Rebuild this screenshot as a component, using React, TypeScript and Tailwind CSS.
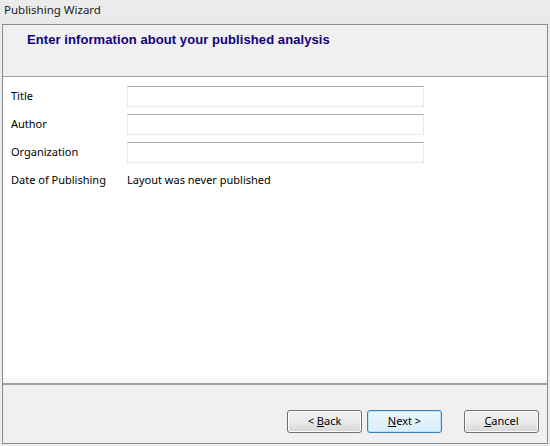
import React from "react";

const font = { fontFamily: '"Noto Sans", "Open Sans", sans-serif' };

const fields = ["Title", "Author", "Organization"];

const WizardButton = ({ children, focused }: { children: React.ReactNode; focused?: boolean }) => (
  <button
    className={
      focused
        ? "h-[23px] w-[75px] rounded-[3px] border border-[#3c7fb1] bg-gradient-to-b from-[#eaf6fd] to-[#d9eefa] pb-[1px] text-[11px] text-black shadow-[inset_0_0_0_1px_#b7e4f9]"
        : "h-[23px] w-[75px] rounded-[3px] border border-[#707070] bg-gradient-to-b from-[#f2f2f2] via-[#ebebeb] to-[#d6d6d6] pb-[1px] text-[11px] text-black shadow-[inset_0_0_0_1px_#fcfcfc]"
    }
  >
    {children}
  </button>
);

export default function App() {
  return (
    <div className="flex h-[446px] w-[550px] flex-col bg-[#ececec] text-[11px] text-black" style={font}>
      {/* Title bar */}
      <div className="flex h-[24px] items-center bg-gradient-to-b from-[#ececec] to-[#e9e9e9] pb-[4px] pl-[4px] text-[11.5px] text-[#1a1a1a]">
        Publishing Wizard
      </div>

      {/* Frame */}
      <div className="ml-[2px] flex h-[420px] w-[546px] flex-col border border-[#8c8c8c]">
        {/* Header */}
        <div className="h-[52px] border-b border-[#a0a0a0] bg-[#f0f0f0] pl-[24px] pt-[5px]">
          <span
            className="text-[13px] font-bold tracking-[0.08px] text-[#12007f]"
            style={{ fontFamily: '"Liberation Sans", Arial, sans-serif' }}
          >
            Enter information about your published analysis
          </span>
        </div>

        {/* Content */}
        <div className="flex h-[301px] flex-col gap-[7px] bg-white pl-[8px] pr-[2px] pt-[9px]">
          {fields.map((f) => (
            <div key={f} className="flex h-[21px] items-center">
              <span className="w-[116px]">{f}</span>
              <input
                className="h-[21px] w-[297px] border border-[#e3e9ef] border-t-[#abadb3] bg-white outline-none"
                type="text"
              />
            </div>
          ))}
          <div className="flex h-[21px] items-center">
            <span className="w-[116px]">Date of Publishing</span>
            <span>Layout was never published</span>
          </div>
        </div>
        <div className="h-[5px] bg-[#f7f7f7]" />

        {/* Footer */}
        <div className="flex flex-1 items-start justify-end border-t-2 border-[#a0a0a0] bg-[#f0f0f0] pr-[8px] pt-[25px]">
          <div className="flex gap-[5px]">
            <WizardButton>
              &lt; <u>B</u>ack
            </WizardButton>
            <WizardButton focused>
              <u>N</u>ext &gt;
            </WizardButton>
          </div>
          <div className="ml-[22px]">
            <WizardButton>
              <u>C</u>ancel
            </WizardButton>
          </div>
        </div>
      </div>
    </div>
  );
}
